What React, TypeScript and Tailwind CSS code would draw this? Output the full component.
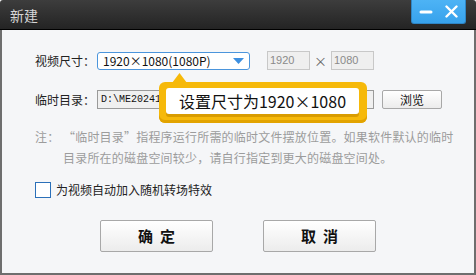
import React from "react";

const App = () => {
  return (
    <div className="w-[476px] h-[275px] flex flex-col font-['Noto_Sans_CJK_SC',sans-serif] overflow-hidden">
      {/* title bar */}
      <div className="h-[30px] shrink-0 flex items-start justify-between bg-gradient-to-b from-[#3d3d3d] to-[#242424] border-b border-black rounded-t-[3px]">
        <span className="pl-[10px] pt-[5px] text-[14px] leading-[20px] text-[#d6d6d6]">新建</span>
        <div className="mr-[10px] w-[55px] h-[24px] flex items-center justify-between px-[7px] rounded-b-[3px] border border-t-0 border-[#2f86c6] bg-gradient-to-b from-[#4db3f5] to-[#37a2ec]">
          <svg width="14" height="4" viewBox="0 0 14 4">
            <rect x="0.5" y="0.5" width="13" height="3" rx="1.5" fill="#fff" />
          </svg>
          <svg width="13" height="13" viewBox="0 0 13 13">
            <path d="M1.5 1.5 L11.5 11.5 M11.5 1.5 L1.5 11.5" stroke="#fff" strokeWidth="2.4" strokeLinecap="round" />
          </svg>
        </div>
      </div>

      {/* body */}
      <div className="relative flex-1 bg-[#f5f6f8] border-l-2 border-r-2 border-b-2 border-[#6e6e6e] pl-[33px]">
        {/* size row */}
        <div className="mt-[21px] flex items-center h-[19px]">
          <span className="w-[62px] text-[12px] text-[#222]">视频尺寸：</span>
          <div className="w-[153px] h-[18px] flex items-center justify-between pl-[5px] pr-[5px] bg-white border border-[#4b95dc] rounded-[3px]">
            <span className="text-[12px] leading-none text-[#111]">1920×1080(1080P)</span>
            <svg width="11" height="6" viewBox="0 0 11 6">
              <path d="M0 0 H11 L5.5 6 Z" fill="#3d8fe0" />
            </svg>
          </div>
          <div className="ml-[17px] w-[43px] h-[19px] flex items-center pl-[2px] bg-[#efefef] border border-[#c8c8c8] text-[11px] text-[#8a8a8a] font-['Liberation_Sans',sans-serif]">1920</div>
          <span className="w-[21px] text-center text-[13px] text-[#666]">×</span>
          <div className="w-[43px] h-[19px] flex items-center pl-[2px] bg-[#efefef] border border-[#c8c8c8] text-[11px] text-[#8a8a8a] font-['Liberation_Sans',sans-serif]">1080</div>
        </div>

        {/* temp dir row */}
        <div className="mt-[20px] flex items-center h-[19px]">
          <span className="w-[62px] text-[12px] text-[#222]">临时目录：</span>
          <div className="w-[277px] h-[19px] flex items-center pl-[3px] bg-[#f0f0f0] border border-[#9a9a9a] text-[10px] text-[#111] font-['Liberation_Mono',monospace]">
            D:\ME20241
          </div>
          <button className="ml-[8px] w-[60px] h-[19px] flex items-center justify-center rounded-[2px] border border-[#a8a8a8] bg-gradient-to-b from-white to-[#ececec] text-[12px] text-[#111]">
            浏览
          </button>
        </div>

        {/* note */}
        <div className="mt-[17px] flex text-[12px] leading-[21px] text-[#9c9c9c] tracking-[0.2px]">
          <span className="w-[28px] shrink-0">注：</span>
          <p>
            “临时目录”指程序运行所需的临时文件摆放位置。如果软件默认的临时
            <br />
            目录所在的磁盘空间较少，请自行指定到更大的磁盘空间处。
          </p>
        </div>

        {/* checkbox */}
        <div className="mt-[14px] flex items-center h-[16px] gap-[5px]">
          <div className="w-[16px] h-[16px] bg-white border border-[#2b70b9]" />
          <span className="text-[12px] text-[#222]">为视频自动加入随机转场特效</span>
        </div>

        {/* buttons */}
        <div className="mt-[22px] ml-[65px] flex gap-[50px]">
          <button className="w-[113px] h-[32px] flex items-center justify-center gap-[7px] rounded-[2px] border border-[#a8a8a8] bg-gradient-to-b from-white to-[#ececec] text-[15px] font-bold text-[#111]">
            <span>确</span>
            <span>定</span>
          </button>
          <button className="w-[113px] h-[32px] flex items-center justify-center gap-[7px] rounded-[2px] border border-[#a8a8a8] bg-gradient-to-b from-white to-[#ececec] text-[15px] font-bold text-[#111]">
            <span>取</span>
            <span>消</span>
          </button>
        </div>

        {/* tooltip */}
        <div className="absolute left-[157px] top-[52px]">
          <svg className="absolute left-[13px] top-[-9px]" width="15" height="10" viewBox="0 0 15 10">
            <path d="M0 10 L7.5 0 L15 10 Z" fill="#f6b90a" />
          </svg>
          <div className="w-[208px] h-[41px] pt-[6px] pl-[7px] pr-[8px] pb-[9px] rounded-[6px] bg-[#f6b90a] shadow-[inset_0_-3px_0_#e2a300]">
            <div className="h-full flex items-center justify-center rounded-[3px] bg-white shadow-[0_3px_0_#d99c00] text-[16px] text-[#111]">
              设置尺寸为1920×1080
            </div>
          </div>
        </div>
      </div>
    </div>
  );
};

export default App;
